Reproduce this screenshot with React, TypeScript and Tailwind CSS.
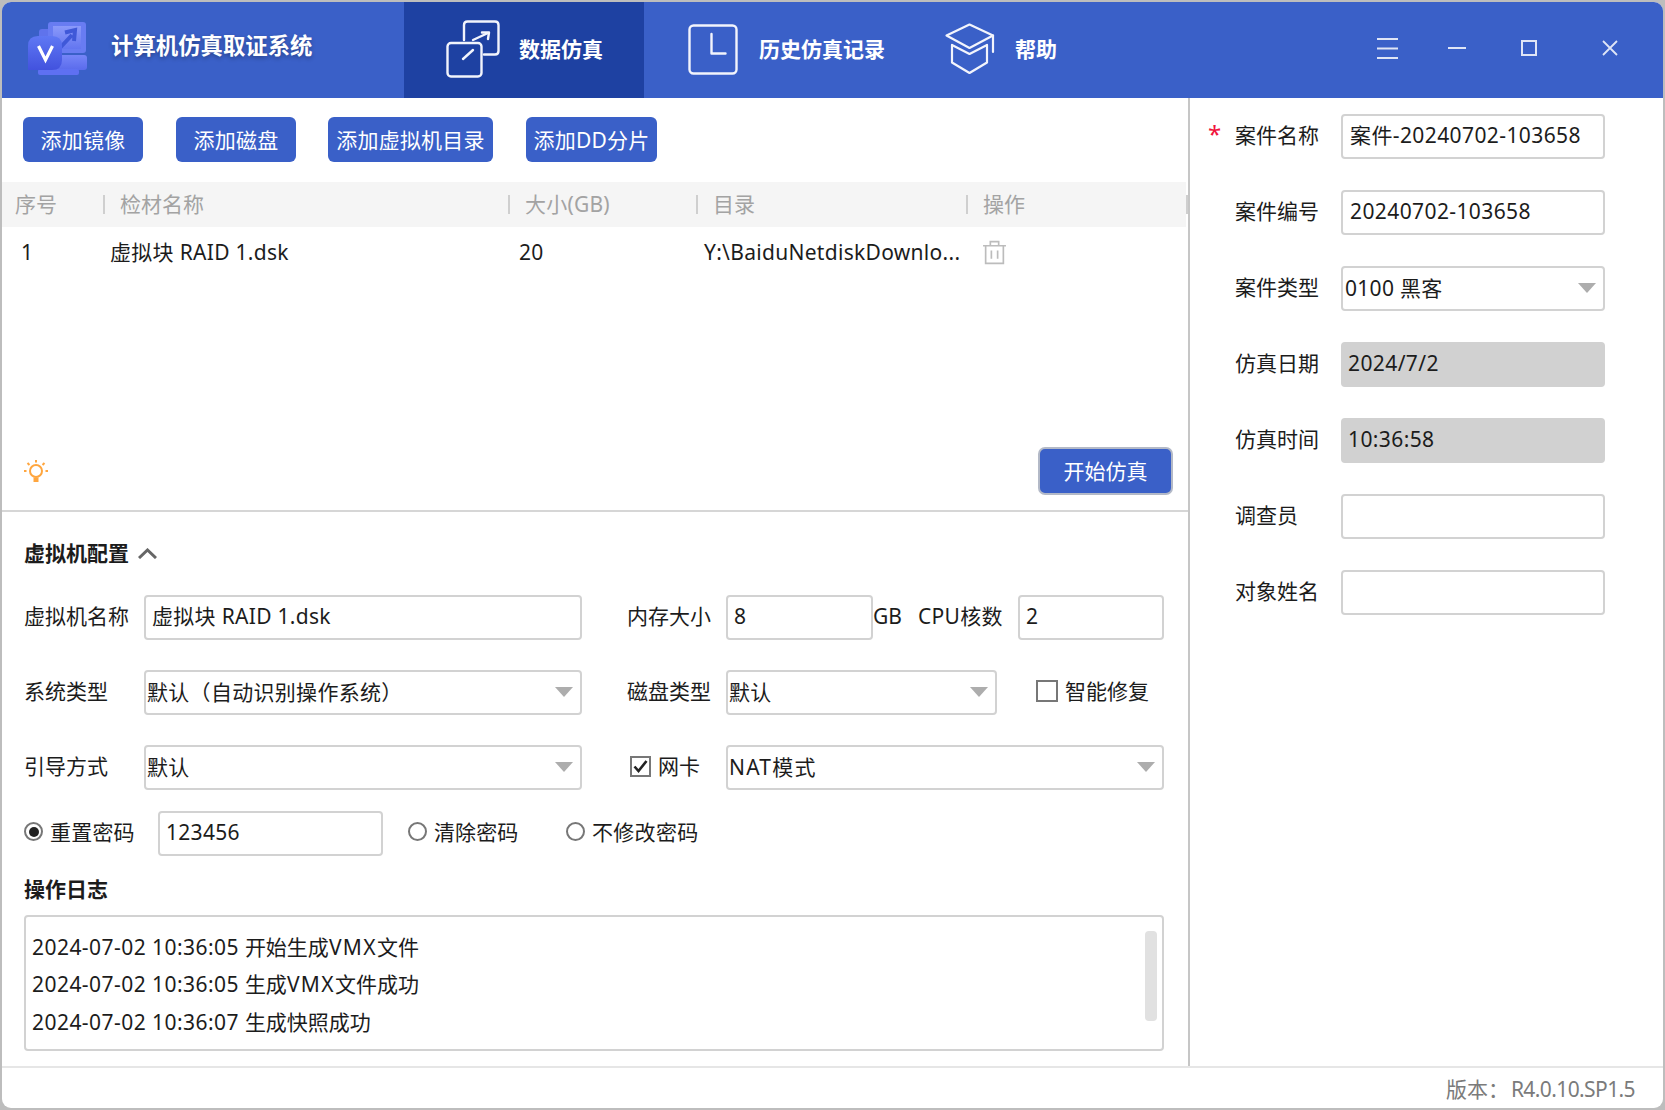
import React from "react";

const Caret = () => (
  <svg width="18" height="10" viewBox="0 0 18 10" className="shrink-0"><path d="M0 0H18L9 10Z" fill="#adadad" /></svg>
);

const Field = ({ className, children, bg }: { className: string; children?: React.ReactNode; bg?: boolean }) => (
  <div className={`h-[45px] shrink-0 rounded-[4px] flex items-center pl-[6px] pb-[3px] tracking-[0.3px] whitespace-nowrap ${bg ? "bg-[#d1d1d1]" : "border-2 border-[#d2d2d2] bg-white"} ${className}`}>
    {children}
  </div>
);

const Select = ({ className, children }: { className: string; children: React.ReactNode }) => (
  <div className={`h-[45px] shrink-0 rounded-[4px] flex items-center justify-between pl-[1px] pr-[7px] pb-[2px] tracking-[0.3px] whitespace-nowrap border-2 border-[#d2d2d2] bg-white ${className}`}>
    <span>{children}</span>
    <Caret />
  </div>
);

const Radio = ({ on }: { on?: boolean }) => (
  <span className="w-[19px] h-[19px] mb-[4px] shrink-0 rounded-full border-2 border-[#777] flex items-center justify-center">
    {on && <span className="w-[10px] h-[10px] rounded-full bg-[#222]" />}
  </span>
);

const Btn = ({ className, children }: { className: string; children: React.ReactNode }) => (
  <div className={`h-[45px] rounded-[6px] bg-[#3a60c8] text-white flex items-center justify-center whitespace-nowrap tracking-[0.2px] ${className}`}>{children}</div>
);

const Logo = () => (
  <svg width="60" height="54" viewBox="28 22 60 54" className="shrink-0 -mt-[1px]">
    <defs>
      <linearGradient id="lg1" x1="0" y1="0" x2="0" y2="1"><stop offset="0" stopColor="#8a99fa" /><stop offset="1" stopColor="#6376f0" /></linearGradient>
      <linearGradient id="lg2" x1="0" y1="0" x2="0" y2="1"><stop offset="0" stopColor="#5f78f4" /><stop offset="1" stopColor="#4252de" /></linearGradient>
      <linearGradient id="lg3" x1="0" y1="0" x2="0" y2="1"><stop offset="0" stopColor="#7585f8" /><stop offset="1" stopColor="#5a6bec" /></linearGradient>
    </defs>
    <rect x="39" y="29" width="24" height="14" rx="3" fill="#5f73ec" />
    <rect x="48" y="22" width="38" height="31" rx="3" fill="#687cf2" />
    <rect x="53" y="26" width="28" height="23" fill="url(#lg1)" />
    <path d="M58 50L72 35M65 32.500L75 30L74 41" fill="none" stroke="#3f58d8" strokeWidth="4" />
    <path d="M55 55H84Q87 55 87 58V67Q87 70 84 70H55Z" fill="url(#lg3)" />
    <rect x="38" y="69" width="41" height="6" rx="2" fill="#5e70f2" />
    <path d="M38 36H52Q62 36 62 46V60Q62 70 52 70H28V46Q28 36 38 36Z" fill="url(#lg2)" />
    <path d="M38.500 46L45.500 60L52.500 46" fill="none" stroke="#fff" strokeWidth="3.200" />
  </svg>
);

const TabIconSim = () => (
  <svg width="54" height="58" viewBox="0 0 54 58" fill="none" stroke="#f2f4fc" strokeWidth="2.400" strokeLinecap="round" strokeLinejoin="round" className="shrink-0">
    <path d="M18 20V5Q18 1.500 21.500 1.500H49Q52.500 1.500 52.500 5V31Q52.500 34.500 49 34.500H38" />
    <rect x="1.500" y="23" width="34" height="33.500" rx="3.500" />
    <path d="M27 20L42 13" />
    <path d="M36 12.500L43 12.500L42 19" />
    <path d="M17 39L27 30" />
  </svg>
);

const TabIconClock = () => (
  <svg width="50" height="51" viewBox="0 0 50 51" fill="none" stroke="#f2f4fc" strokeWidth="2.400" strokeLinecap="round" strokeLinejoin="round" className="shrink-0">
    <rect x="1.500" y="1.500" width="47" height="48" rx="4" />
    <path d="M23.500 10V29.500H37.500" />
  </svg>
);

const TabIconHelp = () => (
  <svg width="50" height="52" viewBox="0 0 50 52" fill="none" stroke="#f2f4fc" strokeWidth="2.200" strokeLinecap="round" strokeLinejoin="round" className="shrink-0">
    <path d="M1.500 12.500L24.500 1.500L48 12.500L24.500 25Z" />
    <path d="M48 12.500V29" />
    <path d="M7 22V39.500L24.500 50L42 39.500V22" />
    <path d="M7 22L24.500 31L42 22" />
  </svg>
);

const Trash = () => (
  <svg width="25" height="25" viewBox="0 0 24 24" fill="none" stroke="#bcbcbc" strokeWidth="1.600" className="shrink-0">
    <path d="M1 5.500H23" />
    <path d="M8 5V1.500H16V5" />
    <path d="M3.500 5.500V22.500H20.500V5.500" />
    <path d="M9 10V18M15 10V18" />
  </svg>
);

const Bulb = () => (
  <svg width="24" height="25" viewBox="0 0 24 25" fill="none" stroke="#ffa63f" strokeWidth="2" className="shrink-0">
    <circle cx="12" cy="12" r="6" />
    <path d="M9.500 18.500H14.500V23H9.500Z" fill="#ffa63f" stroke="none" />
    <path d="M12 1V3.500M3.500 4L5.500 6M20.500 4L18.500 6M0 12H2.500M21.500 12H24" />
  </svg>
);

const Th = ({ className, children, first }: { className: string; children: React.ReactNode; first?: boolean }) => (
  <div className={`h-full shrink-0 flex items-center pb-[2px] relative ${className}`}>
    {!first && <span className="absolute left-0 top-[13px] w-[2px] h-[19px] bg-[#cfcfcf]" />}
    {children}
  </div>
);

const rightRows: { label: string; value?: string; star?: boolean; bg?: boolean; select?: boolean }[] = [
  { label: "案件名称", value: "案件-20240702-103658", star: true },
  { label: "案件编号", value: "20240702-103658" },
  { label: "案件类型", value: "0100 黑客", select: true },
  { label: "仿真日期", value: "2024/7/2", bg: true },
  { label: "仿真时间", value: "10:36:58", bg: true },
  { label: "调查员", value: "" },
  { label: "对象姓名", value: "" },
];

const logs = [
  ["2024-07-02 10:36:05 ", "开始生成", "VMX", "文件"],
  ["2024-07-02 10:36:05 ", "生成", "VMX", "文件成功"],
  ["2024-07-02 10:36:07 ", "生成快照成功", "", ""],
];

export default function App() {
  return (
    <div className="w-[1665px] h-[1110px] overflow-hidden bg-[#bdbdbd] p-[2px] text-[21px] leading-[28px] text-[#1c1c1c] font-['Noto_Sans','Noto_Sans_CJK_SC',sans-serif]">
      <div className="w-full h-full rounded-[9px] overflow-hidden bg-white flex flex-col">
        {/* header */}
        <header className="h-[96px] shrink-0 bg-[#3a60c8] text-white flex items-center">
          <div className="w-[402px] shrink-0 flex items-center pl-[26px] pb-[2px]">
            <Logo />
            <span className="ml-[23px] -mt-[6px] text-[22.400px] font-bold whitespace-nowrap [text-shadow:0_2px_4px_rgba(0,0,0,0.3)]">计算机仿真取证系统</span>
          </div>
          <div className="w-[240px] h-full shrink-0 bg-[#1e41a2] flex items-center pl-[42px] pb-[2px]">
            <TabIconSim />
            <span className="ml-[19px] font-bold whitespace-nowrap">数据仿真</span>
          </div>
          <div className="flex items-center pl-[44px] pb-[2px]">
            <TabIconClock />
            <span className="ml-[21px] font-bold whitespace-nowrap">历史仿真记录</span>
          </div>
          <div className="flex items-center ml-[60px] pb-[2px]">
            <TabIconHelp />
            <span className="ml-[20px] font-bold whitespace-nowrap">帮助</span>
          </div>
          <div className="ml-auto pr-[45px] pb-[4px] flex items-center">
            <svg width="21" height="21" viewBox="0 0 21 21" stroke="#dfe5f6" strokeWidth="2" className="shrink-0"><path d="M0 1H21M0 10.500H21M0 20H21" /></svg>
            <svg width="18" height="2" viewBox="0 0 18 2" stroke="#dfe5f6" strokeWidth="2" className="shrink-0 ml-[50px]"><path d="M0 1H18" /></svg>
            <svg width="16" height="16" viewBox="0 0 16 16" fill="none" stroke="#dfe5f6" strokeWidth="2" className="shrink-0 ml-[55px]"><rect x="1" y="1" width="14" height="14" /></svg>
            <svg width="16" height="16" viewBox="0 0 16 16" fill="none" stroke="#dfe5f6" strokeWidth="1.800" className="shrink-0 ml-[65px]"><path d="M1 1L15 15M15 1L1 15" /></svg>
          </div>
        </header>

        {/* body */}
        <div className="h-[968px] shrink-0 flex">
          <div className="w-[1186px] shrink-0 flex flex-col">
            <div className="h-[414px] shrink-0 flex flex-col border-b-2 border-[#d6d6d6]">
              <div className="flex pl-[21px] pt-[19px]">
                <Btn className="w-[120px]">添加镜像</Btn>
                <Btn className="w-[120px] ml-[33px]">添加磁盘</Btn>
                <Btn className="w-[165px] ml-[32px]">添加虚拟机目录</Btn>
                <Btn className="w-[131px] ml-[33px]">添加DD分片</Btn>
              </div>
              <div className="mt-[20px] h-[45px] w-[1184px] shrink-0 flex bg-[#f5f5f5] text-[#a3a3a3] relative">
                <Th first className="w-[101px] pl-[13px]">序号</Th>
                <Th className="w-[405px] pl-[17px]">检材名称</Th>
                <Th className="w-[188px] pl-[17px] tracking-[0.2px]">大小(GB)</Th>
                <Th className="w-[270px] pl-[17px]">目录</Th>
                <Th className="w-[220px] pl-[17px]">操作</Th>
                <span className="absolute right-[-2px] top-[13px] w-[2px] h-[19px] bg-[#cfcfcf]" />
              </div>
              <div className="h-[50px] shrink-0 flex items-center whitespace-nowrap tracking-[0.3px]">
                <div className="w-[101px] pl-[19px]">1</div>
                <div className="w-[405px] pl-[7px]">虚拟块 RAID 1.dsk</div>
                <div className="w-[188px] pl-[11px]">20</div>
                <div className="w-[270px] pl-[8px]">Y:\BaiduNetdiskDownlo...</div>
                <div className="pl-[16px]"><Trash /></div>
              </div>
              <div className="mt-auto mb-[15px] pl-[22px] pr-[15px] flex items-center justify-between">
                <Bulb />
                <div className="w-[135px] h-[48px] rounded-[7px] border-2 border-[#b3b9c7] bg-[#3a60c8] text-white flex items-center justify-center whitespace-nowrap">开始仿真</div>
              </div>
            </div>

            <div className="pl-[22px]">
              <div className="mt-[26px] h-[30px] flex items-center font-bold whitespace-nowrap">
                虚拟机配置
                <svg width="19" height="11" viewBox="0 0 19 11" fill="none" stroke="#666" strokeWidth="3" className="ml-[9px] shrink-0"><path d="M1 10L9.500 2L18 10" /></svg>
              </div>

              <div className="mt-[27px] flex items-center whitespace-nowrap">
                <div className="w-[120px] pb-[3px] shrink-0">虚拟机名称</div>
                <Field className="w-[438px]">虚拟块 RAID 1.dsk</Field>
                <div className="w-[99px] pb-[3px] shrink-0 ml-[45px]">内存大小</div>
                <Field className="w-[147px]">8</Field>
                <div className="w-[45px] pb-[3px] shrink-0">GB</div>
                <div className="w-[100px] pb-[3px] shrink-0 tracking-[0.3px]">CPU核数</div>
                <Field className="w-[146px]">2</Field>
              </div>

              <div className="mt-[30px] flex items-center whitespace-nowrap">
                <div className="w-[120px] pb-[3px] shrink-0">系统类型</div>
                <Select className="w-[438px]">默认（自动识别操作系统）</Select>
                <div className="w-[99px] pb-[3px] shrink-0 ml-[45px]">磁盘类型</div>
                <Select className="w-[271px]">默认</Select>
                <span className="w-[22px] h-[22px] mb-[3px] ml-[39px] shrink-0 border-2 border-[#777]" />
                <span className="ml-[7px] pb-[3px]">智能修复</span>
              </div>

              <div className="mt-[30px] flex items-center whitespace-nowrap">
                <div className="w-[120px] pb-[3px] shrink-0">引导方式</div>
                <Select className="w-[438px]">默认</Select>
                <span className="w-[21px] h-[21px] mb-[3px] ml-[48px] shrink-0 border-2 border-[#777] flex items-center justify-center">
                  <svg width="15" height="13" viewBox="0 0 15 13" fill="none" stroke="#222" strokeWidth="2.600"><path d="M1.500 6.500L5.500 11L13.500 1" /></svg>
                </span>
                <span className="ml-[7px] pb-[3px] w-[68px] shrink-0">网卡</span>
                <Select className="w-[438px]"><span className="tracking-[1.2px]">NAT模式</span></Select>
              </div>

              <div className="mt-[21px] flex items-center whitespace-nowrap">
                <Radio on />
                <span className="ml-[7px] pb-[3px] w-[108px] shrink-0 tracking-[0.2px]">重置密码</span>
                <Field className="w-[225px]">123456</Field>
                <span className="ml-[25px] flex items-center"><Radio /></span>
                <span className="ml-[7px] pb-[3px] w-[132px] shrink-0 tracking-[0.1px]">清除密码</span>
                <Radio />
                <span className="ml-[7px] pb-[3px] tracking-[0.3px]">不修改密码</span>
              </div>

              <div className="mt-[18px] h-[30px] flex items-center font-bold">操作日志</div>

              <div className="mt-[11px] h-[136px] w-[1140px] rounded-[4px] border-2 border-[#d2d2d2] relative pl-[6px] pt-[11px] whitespace-nowrap">
                {logs.map((l, i) => (
                  <div key={i} className="h-[37.500px] flex items-center">
                    <span className="tracking-[0.45px] whitespace-pre">{l[0]}</span>
                    <span>{l[1]}</span>
                    <span className="tracking-[1.400px]">{l[2]}</span>
                    <span>{l[3]}</span>
                  </div>
                ))}
                <span className="absolute right-[5px] top-[14px] w-[12px] h-[90px] rounded-[4px] bg-[#e1e1e1]" />
              </div>
            </div>
          </div>

          <div className="w-[2px] shrink-0 bg-[#c6c6c6]" />

          <div className="flex-1 flex flex-col gap-[31px] pt-[16px] pl-[20px]">
            {rightRows.map((r) => (
              <div key={r.label} className="flex items-center whitespace-nowrap">
                <span className="w-[27px] -ml-[2px] shrink-0 text-[24px] text-[#f0143c] leading-none pb-[6px]">{r.star ? "*" : ""}</span>
                <span className="w-[106px] pb-[3px] shrink-0">{r.label}</span>
                {r.select ? (
                  <Select className="w-[264px] pl-[2px]">{r.value}</Select>
                ) : (
                  <Field className={`w-[264px] pl-[7px] tracking-[0.4px]`} bg={r.bg}>{r.value}</Field>
                )}
              </div>
            ))}
          </div>
        </div>

        {/* footer */}
        <footer className="flex-1 border-t-2 border-[#e6e6e6] flex items-center justify-end pr-[28px] pt-[1px] text-[#7b7b7b] whitespace-nowrap">
          <span>版本：</span>
          <span className="ml-[2px] tracking-[-0.6px]">R4.0.10.SP1.5</span>
        </footer>
      </div>
    </div>
  );
}
